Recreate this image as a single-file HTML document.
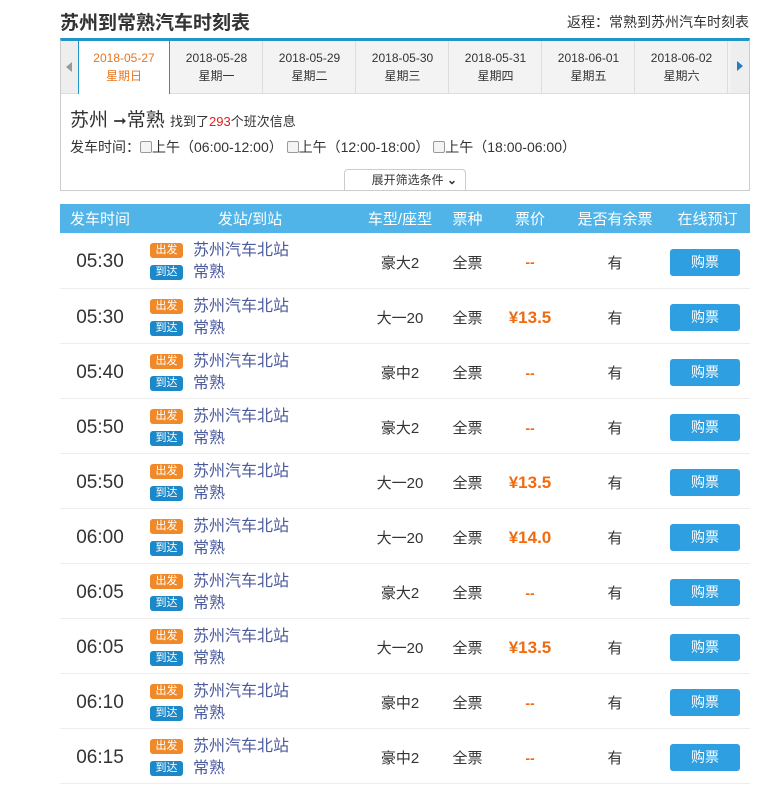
<!DOCTYPE html><html><head><meta charset="utf-8"><style>
body{margin:0;background:#fff;font-family:"Liberation Sans","Noto Sans CJK SC",sans-serif;color:#333;width:757px;height:794px;overflow:hidden;position:relative}
.a{position:absolute}
.title{left:60px;top:8px;font-size:19px;font-weight:bold;color:#333}
.ret{right:8px;top:12px;font-size:14px;color:#333}
.panel{left:60px;top:38px;width:688px;height:149px;border:1px solid #ccc;border-top:3px solid #1f95c8;box-sizing:content-box}
.tabs{left:0;top:0;width:688px;height:52px;background:#f3f3f3;border-bottom:1px solid #ddd}
.tab{top:0;width:92px;height:52px;border-right:1px solid #ddd;text-align:center;font-size:12px;color:#333;line-height:18px;padding-top:8px;box-sizing:border-box}
.tab.on{background:#fff;color:#e8761f;border-left:1px solid #1f95c8;border-right:1px solid #1f95c8;height:53px}
th,td{padding:0;font-weight:normal}
table{position:absolute;left:60px;top:204px;width:690px;border-collapse:collapse;table-layout:fixed}
thead tr{background:#50b4e8;color:#fff;height:29px;font-size:15px}
tbody tr{height:55px;border-bottom:1px solid #eee}
td{text-align:center;font-size:15px;padding-top:4px}
.t{font-size:19px;color:#333}
.st{text-align:left;font-size:16px;color:#4b5a9e;line-height:22px}
.b{display:inline-block;color:#fff;font-size:11px;width:33px;height:15px;line-height:15px;text-align:center;border-radius:3px;margin-right:10px;vertical-align:2px}
.o{background:#f0892a}.u{background:#1a88c9}
.p{color:#f06b10;font-weight:bold;font-size:17px}
.btn{display:inline-block;width:70px;height:27px;line-height:27px;background:#2e9fe0;color:#fff;border-radius:3px;font-size:14px}
.cb{display:inline-block;width:10px;height:10px;border:1px solid #999;border-radius:2px;background:#f4f4f4;vertical-align:-1px}
</style></head><body>
<div class="a title">苏州到常熟汽车时刻表</div>
<div class="a ret">返程：常熟到苏州汽车时刻表</div>
<div class="a panel">
 <div class="a tabs">
  <div class="a" style="left:0;top:0;width:17px;height:52px;border-right:1px solid #ddd;background:#eee"><div class="a" style="left:5px;top:21px;border:5px solid transparent;border-right:6px solid #999;border-left:0"></div></div>
  <div class="a tab on" style="left:17px">2018-05-27<br>星期日</div>
  <div class="a tab" style="left:110px">2018-05-28<br>星期一</div>
  <div class="a tab" style="left:203px">2018-05-29<br>星期二</div>
  <div class="a tab" style="left:296px">2018-05-30<br>星期三</div>
  <div class="a tab" style="left:389px">2018-05-31<br>星期四</div>
  <div class="a tab" style="left:482px">2018-06-01<br>星期五</div>
  <div class="a tab" style="left:575px">2018-06-02<br>星期六</div>
  <div class="a" style="left:670px;top:0;width:18px;height:52px;background:#eee"><div class="a" style="left:6px;top:20px;border:5px solid transparent;border-left:6px solid #1f7fc0;border-right:0"></div></div>
 </div>
 <div class="a" style="left:9px;top:64px;font-size:19px;color:#333">苏州 <span style="font-size:16px">➞</span>常熟 <span style="font-size:13px">找到了<span style="color:#e02020">293</span>个班次信息</span></div>
 <div class="a" style="left:9px;top:96px;font-size:14px;color:#333;white-space:nowrap">发车时间：<span class="cb"></span>上午（06:00-12:00） <span class="cb"></span>上午（12:00-18:00） <span class="cb"></span>上午（18:00-06:00）</div>
 <div class="a" style="left:283px;top:128px;width:122px;height:21px;border:1px solid #ccc;border-bottom:0;border-radius:4px 4px 0 0;font-size:12px;text-align:right;line-height:21px;box-sizing:border-box;padding-right:8px">展开筛选条件 <b>⌄</b></div>
</div>
<table>
<colgroup><col style="width:80px"><col style="width:220px"><col style="width:80px"><col style="width:55px"><col style="width:70px"><col style="width:100px"><col style="width:85px"></colgroup>
<thead><tr><th>发车时间</th><th>发站/到站</th><th>车型/座型</th><th>票种</th><th>票价</th><th>是否有余票</th><th>在线预订</th></tr></thead>
<tbody id="tb"></tbody></table>
<script>
var d=[["05:30","豪大2",0],["05:30","大一20","13.5"],["05:40","豪中2",0],["05:50","豪大2",0],["05:50","大一20","13.5"],["06:00","大一20","14.0"],["06:05","豪大2",0],["06:05","大一20","13.5"],["06:10","豪中2",0],["06:15","豪中2",0]];
var h="";d.forEach(function(r){h+='<tr><td class="t">'+r[0]+'</td><td class="st" style="padding-left:10px"><span class="b o">出发</span>苏州汽车北站<br><span class="b u">到达</span>常熟</td><td>'+r[1]+'</td><td>全票</td><td class="p">'+(r[2]?'¥'+r[2]:'<span style="font-size:14px">--</span>')+'</td><td>有</td><td style="text-align:left;padding-left:5px"><span class="btn" style="text-align:center">购票</span></td></tr>'});
document.getElementById("tb").innerHTML=h;
</script>
</body></html>
